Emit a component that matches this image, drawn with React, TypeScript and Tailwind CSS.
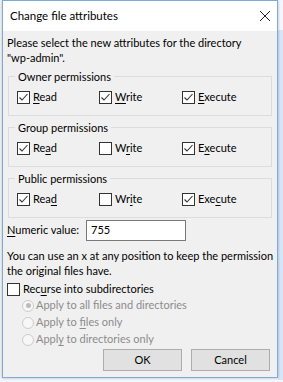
import React from "react";

function Check({ checked }: { checked: boolean }) {
  return (
    <span className="w-[13px] h-[13px] border border-[#333333] bg-white flex items-center justify-center shrink-0">
      {checked && (
        <svg width="11" height="11" viewBox="0 0 11 11">
          <path d="M1.5 5.5 L4 8 L9.5 2" fill="none" stroke="#333" strokeWidth="1.1" />
        </svg>
      )}
    </span>
  );
}

function CB({ checked, pre, u, post }: { checked: boolean; pre: string; u: string; post: string }) {
  return (
    <div className="flex items-center gap-[3px] whitespace-nowrap">
      <Check checked={checked} />
      <span>
        {pre}
        <span className="underline underline-offset-2">{u}</span>
        {post}
      </span>
    </div>
  );
}

function Group({ title, items }: { title: string; items: [boolean, string, string, string][] }) {
  return (
    <div className="relative border border-[#dcdcdc] mx-[5px] h-[40px] mt-[11px]">
      <span className="absolute left-[6px] top-[-8px] bg-[#f0f0f0] px-[3px] leading-[16px] whitespace-nowrap">{title}</span>
      <div className="grid grid-cols-[82px_83px_80px] pl-[8px] pt-[12px]">
        {items.map((it, i) => (
          <CB key={i} checked={it[0]} pre={it[1]} u={it[2]} post={it[3]} />
        ))}
      </div>
    </div>
  );
}

function Radio({ pre, u, post, selected }: { pre: string; u: string; post: string; selected?: boolean }) {
  return (
    <div className="flex items-center gap-[2px] h-[17px] pl-[19px] text-[#8c8c8c] whitespace-nowrap">
      <span className="w-[12px] h-[12px] rounded-full border border-[#cccccc] bg-[#f7f7f7] flex items-center justify-center shrink-0">
        {selected && <span className="w-[5px] h-[5px] rounded-full bg-[#bcbcbc]" />}
      </span>
      <span>
        {pre}
        <span className="underline underline-offset-2">{u}</span>
        {post}
      </span>
    </div>
  );
}

export default function App() {
  return (
    <div
      className="w-[283px] h-[382px] bg-[#f4f7fb] relative overflow-hidden text-[11px] text-black"
      style={{ fontFamily: 'Lato, "Segoe UI", sans-serif' }}
    >
      <div className="absolute right-0 top-[30px] w-[5px] h-[350px] bg-[#d5e6f6]" />
      <div className="absolute left-[2px] top-0 w-[276px] h-[378px] border border-[#7fa9d6] bg-[#f0f0f0] flex flex-col shadow-[0_0_3px_rgba(0,0,0,0.25)]">
        <div className="h-[30px] bg-white flex items-center justify-between pl-[7px] pr-[6px] shrink-0">
          <span className="text-[11.5px]">Change file attributes</span>
          <svg width="12" height="12" viewBox="0 0 12 12">
            <path d="M1 1 L11 11 M11 1 L1 11" stroke="#222" strokeWidth="1" />
          </svg>
        </div>
        <div className="px-[4px] pt-[4px] leading-[15px] whitespace-nowrap">
          <div>Please select the new attributes for the directory</div>
          <div>"wp-admin".</div>
        </div>
        <Group
          title="Owner permissions"
          items={[
            [true, "", "R", "ead"],
            [true, "", "W", "rite"],
            [true, "", "E", "xecute"],
          ]}
        />
        <Group
          title="Group permissions"
          items={[
            [true, "Re", "a", "d"],
            [false, "W", "r", "ite"],
            [true, "E", "x", "ecute"],
          ]}
        />
        <Group
          title="Public permissions"
          items={[
            [true, "Rea", "d", ""],
            [false, "Wr", "i", "te"],
            [true, "Exe", "c", "ute"],
          ]}
        />
        <div className="flex items-center px-[4px] mt-[1px] h-[22px] whitespace-nowrap">
          <span className="w-[79px]">
            <span className="underline underline-offset-2">N</span>umeric value:
          </span>
          <div className="w-[100px] h-[21px] border border-[#7a7a7a] bg-white flex items-center px-[4px]">755</div>
        </div>
        <div className="px-[4px] pt-[7px] leading-[15px] whitespace-nowrap">
          <div>You can use an x at any position to keep the permission</div>
          <div>the original files have.</div>
        </div>
        <div className="px-[4px] pt-[3px] h-[19px] flex items-center">
          <CB checked={false} pre="Rec" u="u" post="rse into subdirectories" />
        </div>
        <Radio selected pre="Apply to all files and directories" u="" post="" />
        <Radio pre="Apply to " u="f" post="iles only" />
        <Radio pre="Appl" u="y" post=" to directories only" />
        <div className="flex justify-end gap-[9px] pr-[7px] mt-[1px]">
          <div className="w-[79px] h-[22px] border border-[#adadad] bg-[#e1e1e1] flex items-center justify-center">OK</div>
          <div className="w-[79px] h-[22px] border border-[#adadad] bg-[#e1e1e1] flex items-center justify-center">Cancel</div>
        </div>
      </div>
    </div>
  );
}
